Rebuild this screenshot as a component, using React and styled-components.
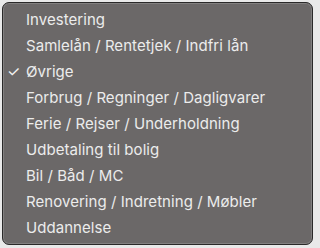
import React from "react";
import styled, { createGlobalStyle } from "styled-components";

const GlobalStyle = createGlobalStyle`
  html, body {
    margin: 0;
    padding: 0;
    background: #e9e9e9;
  }
  body {
    font-family: Inter, "Noto Sans", "Liberation Sans", sans-serif;
    -webkit-font-smoothing: antialiased;
  }
`;

const Menu = styled.ul`
  box-sizing: border-box;
  list-style: none;
  margin: 2px 3px 3px 2px;
  padding: 3px 0;
  width: 311px;
  height: 243px;
  background: #6b6868;
  border: 1px solid #2a2929;
  border-radius: 7px;
  box-shadow: inset 0 0 0 1px rgba(255, 255, 255, 0.16);
`;

const Item = styled.li`
  display: flex;
  align-items: center;
  height: 26px;
  padding-left: 4px;
  color: #ececec;
  font-size: 15px;
  letter-spacing: 0.05px;
  white-space: nowrap;
`;

const Check = styled.span`
  width: 19px;
  flex: none;
  font-size: 15px;
  color: ${(p) => (p.$on ? "#f2f2f2" : "transparent")};
`;

const options = [
  "Investering",
  "Samlelån / Rentetjek / Indfri lån",
  "Øvrige",
  "Forbrug / Regninger / Dagligvarer",
  "Ferie / Rejser / Underholdning",
  "Udbetaling til bolig",
  "Bil / Båd / MC",
  "Renovering / Indretning / Møbler",
  "Uddannelse",
];

const App = () => {
  const selected = "Øvrige";

  return (
    <>
      <GlobalStyle />
      <Menu>
        {options.map((label) => (
          <Item key={label}>
            <Check $on={label === selected}>✓</Check>
            {label}
          </Item>
        ))}
      </Menu>
    </>
  );
};

export default App;
